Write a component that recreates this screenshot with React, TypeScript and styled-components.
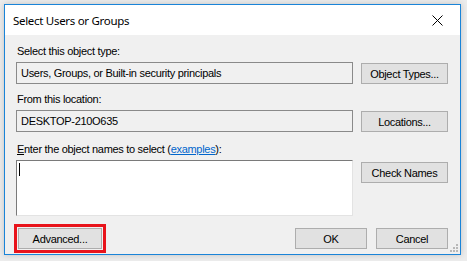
import React from 'react';
import styled, { createGlobalStyle } from 'styled-components';

const GlobalStyle = createGlobalStyle`
  html, body {
    margin: 0;
    padding: 0;
    background: #ececec;
  }
`;

const Page = styled.div`
  padding: 4px 0 0 4px;
  width: 467px;
  height: 261px;
  box-sizing: border-box;
`;

const Window = styled.div`
  width: 457px;
  height: 251px;
  box-sizing: border-box;
  border: 1px solid #1a84d8;
  background: #f0f0f0;
  display: flex;
  flex-direction: column;
  box-shadow: 0 0 6px rgba(0, 0, 0, 0.18);
`;

const TitleBar = styled.div`
  height: 30px;
  background: #fff;
  display: flex;
  align-items: center;
  justify-content: space-between;
  padding: 0 0 0 8px;
  font-family: 'Noto Sans', 'Open Sans', sans-serif;
  font-size: 11.5px;
  letter-spacing: -0.3px;
  color: #000;
`;

const CloseButton = styled.div`
  width: 46px;
  height: 30px;
  display: flex;
  align-items: center;
  justify-content: center;
`;

const Body = styled.div`
  flex: 1;
  position: relative;
  padding: 10px 12px 0 11px;
  font-family: 'Liberation Sans', Arial, sans-serif;
  font-size: 11px;
  letter-spacing: -0.3px;
  color: #000;
`;

const Label = styled.div<{ $gap?: number }>`
  height: 13px;
  line-height: 13px;
  margin-top: ${(p) => p.$gap ?? 0}px;
  margin-bottom: 4px;
  padding-left: 1px;
`;

const Row = styled.div`
  display: grid;
  grid-template-columns: 337px 87px;
  column-gap: 8px;
  align-items: start;
`;

const Field = styled.div`
  height: 22px;
  box-sizing: border-box;
  border: 1px solid #8a8a8a;
  background: #f0f0f0;
  padding: 0 4px;
  line-height: 20px;
  white-space: nowrap;
`;

const NamesBox = styled.div`
  height: 56px;
  box-sizing: border-box;
  border-style: solid;
  border-width: 1px;
  border-color: #7a7a7a #e3e3e3 #e3e3e3 #7a7a7a;
  background: #fff;
  padding: 2px 2px;
`;

const Caret = styled.div`
  width: 1px;
  height: 13px;
  background: #000;
`;

const Button = styled.div<{ $width?: number; $offset?: number }>`
  height: 21px;
  width: ${(p) => (p.$width ? `${p.$width}px` : 'auto')};
  box-sizing: border-box;
  border: 1px solid #adadad;
  background: #e1e1e1;
  display: flex;
  align-items: center;
  justify-content: center;
  margin-top: ${(p) => p.$offset ?? 0}px;
`;

const Link = styled.span`
  color: #0066cc;
  text-decoration: underline;
`;

const Accel = styled.span`
  text-decoration: underline;
`;

const Footer = styled.div`
  display: flex;
  align-items: flex-start;
  justify-content: space-between;
  margin-top: 12px;
`;

const Highlight = styled.div`
  border: 3px solid #e8131b;
  padding: 1px;
  margin: -4px 0 0 -2px;
`;

const RightButtons = styled.div`
  display: flex;
  gap: 9px;
`;

const Grip = styled.svg`
  position: absolute;
  right: 1px;
  bottom: 1px;
`;

const App = () => {
  return (
    <Page>
      <GlobalStyle />
      <Window>
        <TitleBar>
          <span>Select Users or Groups</span>
          <CloseButton>
            <svg width="11" height="11" viewBox="0 0 11 11">
              <path d="M0.5 0.5 L10.5 10.5 M10.5 0.5 L0.5 10.5" stroke="#000" strokeWidth="1" />
            </svg>
          </CloseButton>
        </TitleBar>
        <Body>
          <Label>Select this object type:</Label>
          <Row>
            <Field>Users, Groups, or Built-in security principals</Field>
            <Button $offset={1}>Object Types...</Button>
          </Row>
          <Label $gap={9}>From this location:</Label>
          <Row>
            <Field>DESKTOP-210O635</Field>
            <Button $offset={1}>Locations...</Button>
          </Row>
          <Label $gap={11}>
            <Accel>E</Accel>nter the object names to select (<Link>examples</Link>):
          </Label>
          <Row>
            <NamesBox>
              <Caret />
            </NamesBox>
            <Button $offset={2}>Check Names</Button>
          </Row>
          <Footer>
            <Highlight>
              <Button $width={84}>Advanced...</Button>
            </Highlight>
            <RightButtons>
              <Button $width={72}>OK</Button>
              <Button $width={72}>Cancel</Button>
            </RightButtons>
          </Footer>
          <Grip width="10" height="10" viewBox="0 0 10 10">
            {[
              [7, 1],
              [7, 4],
              [4, 4],
              [7, 7],
              [4, 7],
              [1, 7],
            ].map(([x, y]) => (
              <rect key={`${x}-${y}`} x={x} y={y} width="2" height="2" fill="#b8b8b8" />
            ))}
          </Grip>
        </Body>
      </Window>
    </Page>
  );
};

export default App;
